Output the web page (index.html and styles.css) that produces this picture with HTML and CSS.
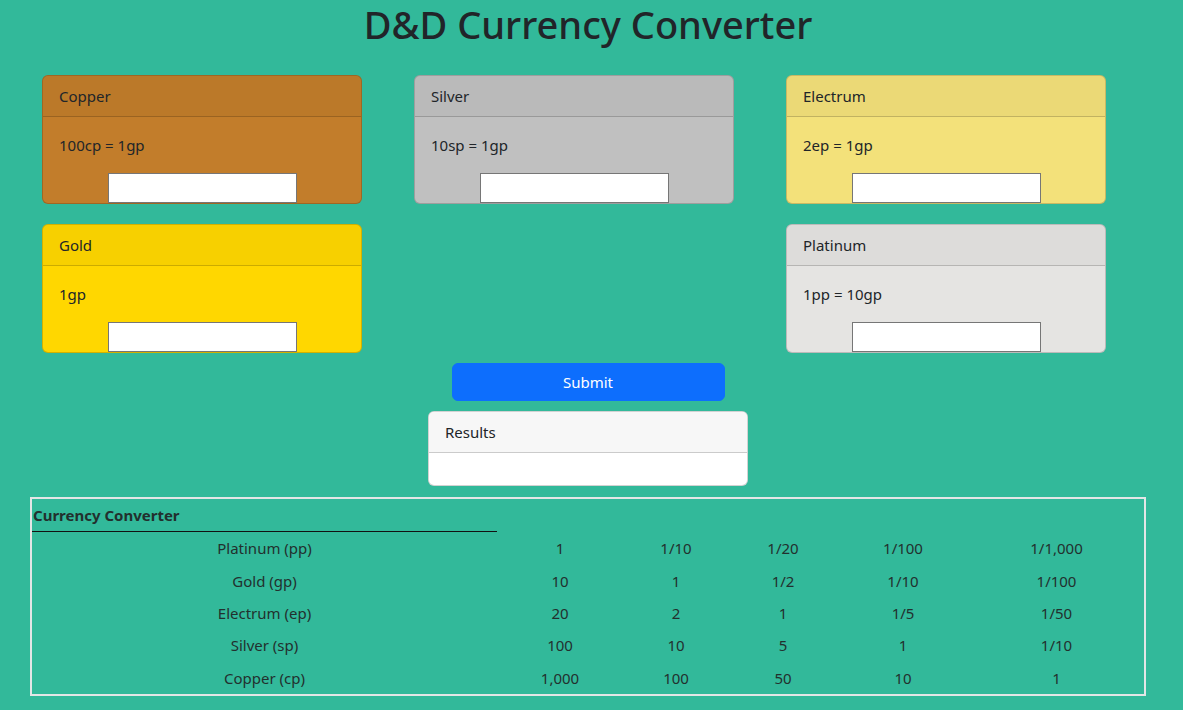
FILE: index.html
```html
<!DOCTYPE html>
<html lang="en">
<head>
<meta charset="utf-8">
<title>D&amp;D Currency Converter</title>
<link rel="stylesheet" href="styles.css">
</head>
<body>
<main class="page">
  <h1 class="title">D&amp;D Currency Converter</h1>

  <section class="coins">
    <div class="card copper">
      <div class="card-header">Copper</div>
      <div class="card-body">
        <p class="rate">100cp = 1gp</p>
        <input class="coin-input" type="text">
      </div>
    </div>
    <div class="card silver">
      <div class="card-header">Silver</div>
      <div class="card-body">
        <p class="rate">10sp = 1gp</p>
        <input class="coin-input" type="text">
      </div>
    </div>
    <div class="card electrum">
      <div class="card-header">Electrum</div>
      <div class="card-body">
        <p class="rate">2ep = 1gp</p>
        <input class="coin-input" type="text">
      </div>
    </div>
    <div class="card gold">
      <div class="card-header">Gold</div>
      <div class="card-body">
        <p class="rate">1gp</p>
        <input class="coin-input" type="text">
      </div>
    </div>
    <div class="spacer"></div>
    <div class="card platinum">
      <div class="card-header">Platinum</div>
      <div class="card-body">
        <p class="rate">1pp = 10gp</p>
        <input class="coin-input" type="text">
      </div>
    </div>
  </section>

  <div class="actions">
    <button class="submit" type="button">Submit</button>
  </div>

  <div class="results-wrap">
    <div class="card results">
      <div class="card-header">Results</div>
      <div class="results-body"></div>
    </div>
  </div>

  <table class="conv">
    <colgroup>
      <col class="c1"><col class="c2"><col class="c3"><col class="c4"><col class="c5"><col class="c6">
    </colgroup>
    <thead>
      <tr><th class="cap">Currency Converter</th><th></th><th></th><th></th><th></th><th></th></tr>
    </thead>
    <tbody>
      <tr><td>Platinum (pp)</td><td>1</td><td>1/10</td><td>1/20</td><td>1/100</td><td>1/1,000</td></tr>
      <tr><td>Gold (gp)</td><td>10</td><td>1</td><td>1/2</td><td>1/10</td><td>1/100</td></tr>
      <tr><td>Electrum (ep)</td><td>20</td><td>2</td><td>1</td><td>1/5</td><td>1/50</td></tr>
      <tr><td>Silver (sp)</td><td>100</td><td>10</td><td>5</td><td>1</td><td>1/10</td></tr>
      <tr><td>Copper (cp)</td><td>1,000</td><td>100</td><td>50</td><td>10</td><td>1</td></tr>
    </tbody>
  </table>
</main>
</body>
</html>
```
FILE: styles.css
```css
* { box-sizing: border-box; }

html, body {
  margin: 0;
  padding: 0;
}

body {
  background: #32b99a;
  color: #212529;
  font-family: "Segoe UI", "Noto Sans", "Open Sans", sans-serif;
  font-size: 15px;
  line-height: 1.5;
}

.page {
  width: 1116px;
  margin-left: 30px;
}

.title {
  margin: 0;
  height: 48px;
  text-align: center;
  font-size: 38px;
  font-weight: 500;
  line-height: 48px;
  color: #212529;
}

.coins {
  margin-top: 27px;
  display: grid;
  grid-template-columns: repeat(3, 372px);
  row-gap: 20px;
}

.card {
  width: 320px;
  margin-left: 12px;
  border: 1px solid rgba(0, 0, 0, 0.175);
  border-radius: 6px;
  overflow: hidden;
}

.card-header {
  height: 41px;
  padding: 8px 16px;
  line-height: 24px;
  border-bottom: 1px solid rgba(0, 0, 0, 0.175);
  background: rgba(0, 0, 0, 0.03);
}

.card-body {
  padding: 16px 16px 0;
  height: 86px;
}

.rate {
  margin: 0 0 16px;
  line-height: 24px;
}

.coin-input {
  display: block;
  margin: 0 auto;
  width: 189px;
  height: 30px;
  border: 1px solid #767676;
  background: #fff;
  border-radius: 0;
}

.copper { background: #c27d2b; }
.silver { background: #c0c0c0; }
.electrum { background: #f3e17a; }
.gold { background: #ffd700; }
.platinum { background: #e5e4e2; }

.actions {
  margin-top: 10px;
  display: flex;
  justify-content: center;
}

.submit {
  width: 273px;
  height: 38px;
  border: 1px solid #0d6efd;
  border-radius: 6px;
  background: #0d6efd;
  color: #fff;
  font-family: inherit;
  font-size: 15px;
  line-height: 24px;
}

.results-wrap {
  margin-top: 10px;
  display: flex;
  justify-content: center;
}

.results {
  margin-left: 0;
  background: #fff;
}

.results .card-header {
  background: #f7f7f7;
}

.results-body {
  height: 32px;
}

.conv {
  margin-top: 11px;
  width: 1116px;
  border: 2px solid #e3e6e6;
  border-collapse: separate;
  border-spacing: 0;
  table-layout: fixed;
  color: #22302e;
}

.c1 { width: 465px; }
.c2 { width: 126px; }
.c3 { width: 106px; }
.c4 { width: 108px; }
.c5 { width: 132px; }
.c6 { width: 175px; }

.conv th {
  height: 33px;
  padding: 0 1px;
  text-align: left;
  font-weight: 700;
  vertical-align: middle;
}

.conv th.cap {
  border-bottom: 1px solid #111;
}

.conv td {
  height: 32.4px;
  padding: 0;
  text-align: center;
  vertical-align: middle;
  line-height: 24px;
}
```
